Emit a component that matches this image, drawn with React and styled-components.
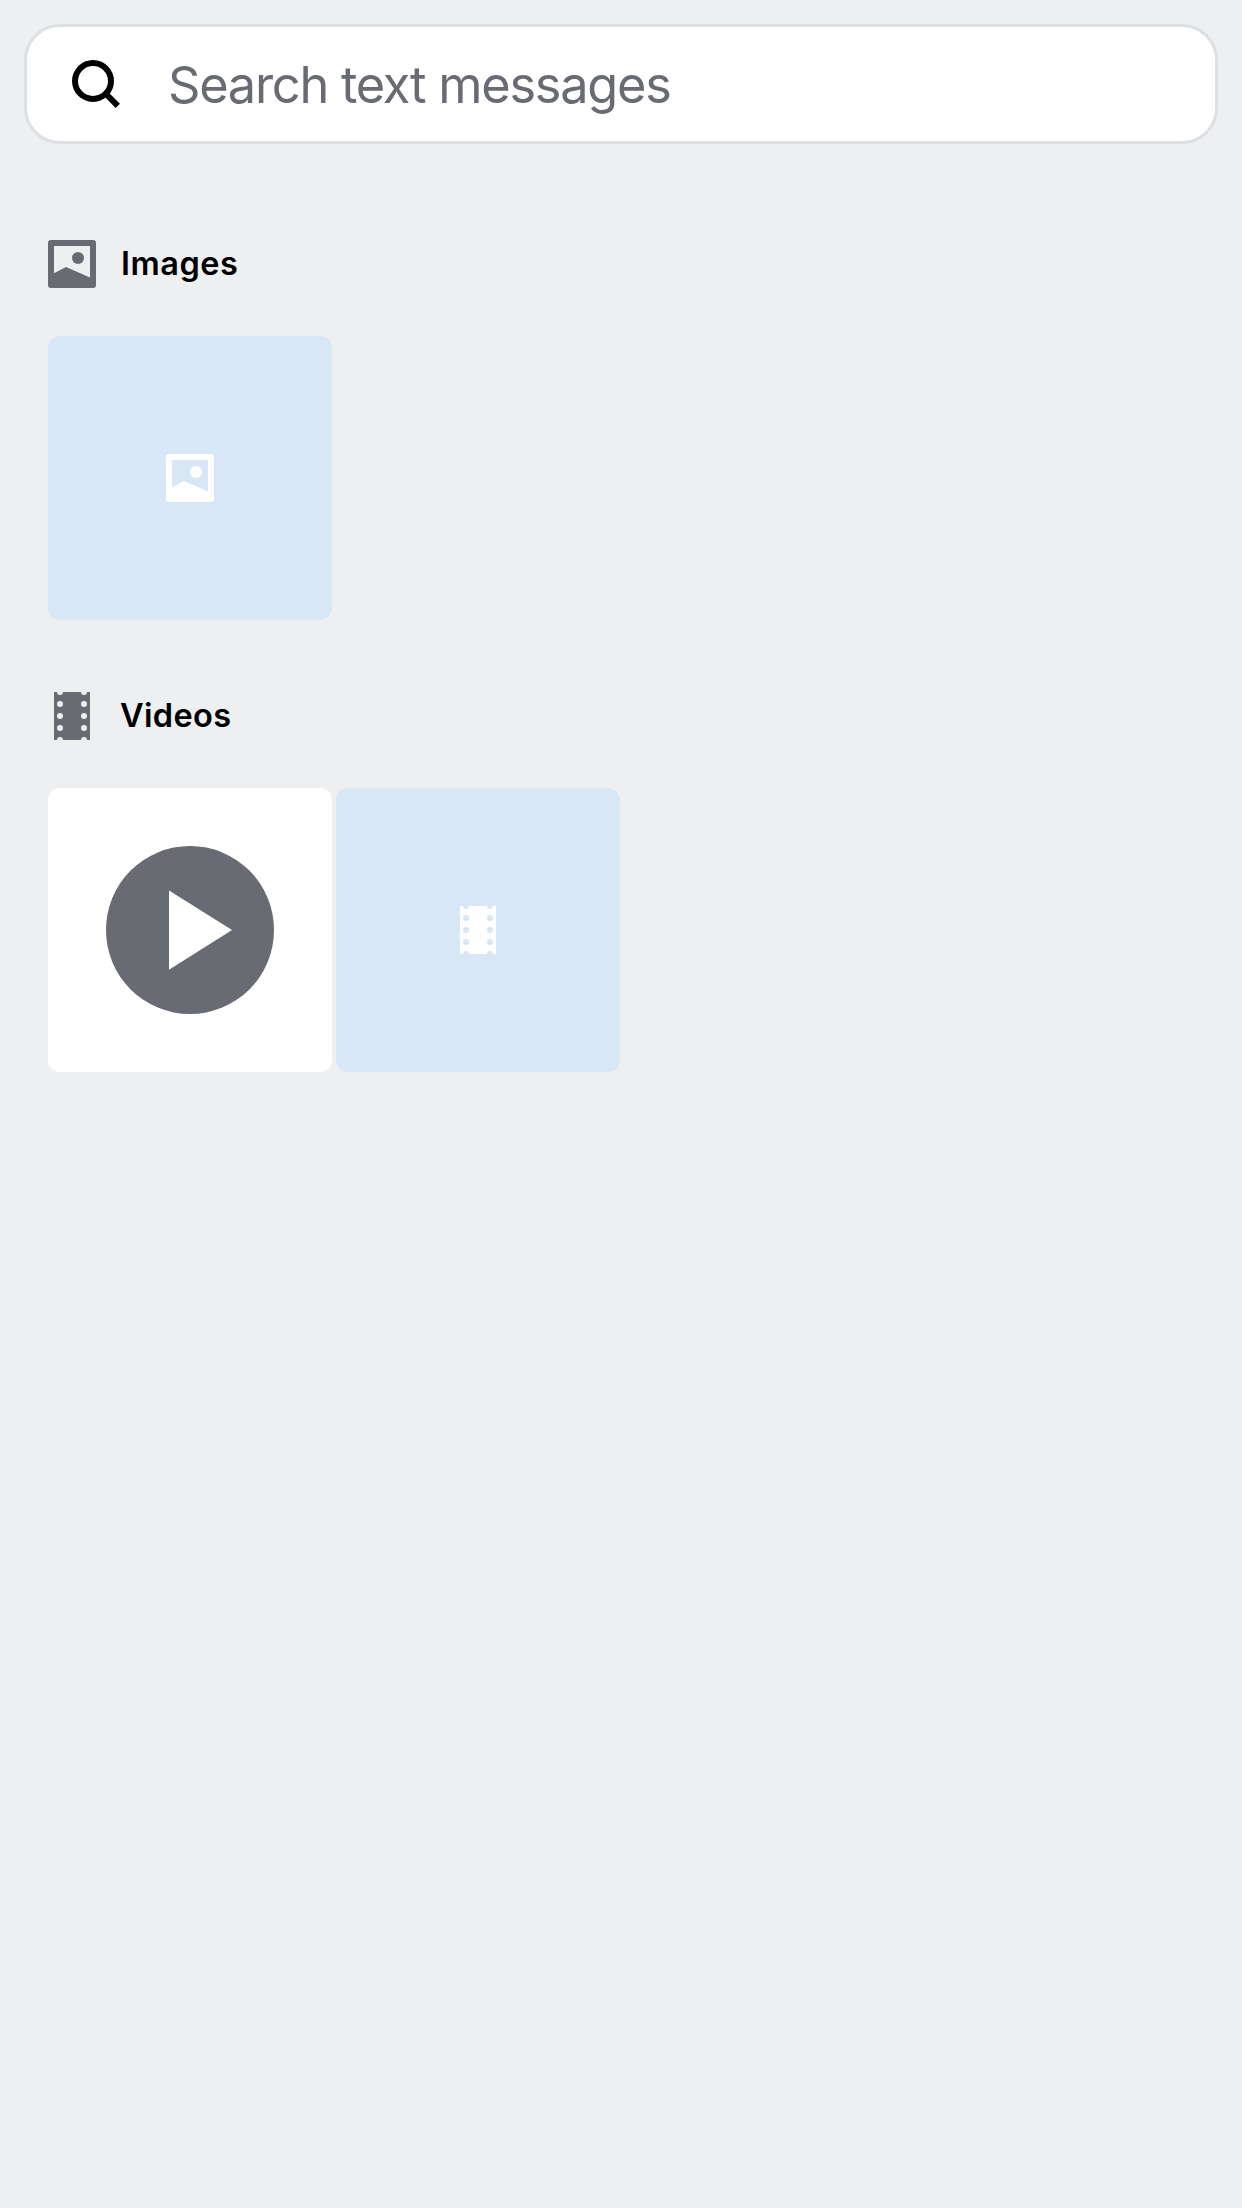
import React from 'react';
import styled, { createGlobalStyle } from 'styled-components';

const GlobalStyle = createGlobalStyle`
  * { box-sizing: border-box; }
  body {
    margin: 0;
    background: #edeff1;
    font-family: Inter, "Liberation Sans", sans-serif;
  }
`;

const Page = styled.main`
  min-height: 2208px;
  padding: 24px;
  background: #edeff1;
`;

const SearchBar = styled.label`
  display: flex;
  align-items: center;
  gap: 48px;
  height: 120px;
  padding: 0 45px;
  border: 3px solid #dce0e3;
  border-radius: 36px;
  background: #fff;
`;

const Placeholder = styled.span`
  color: #686b72;
  font-size: 50.5px;
  line-height: 60px;
  letter-spacing: -1.26px;
  white-space: nowrap;
  padding-top: 2px;
`;

const Sections = styled.div`
  display: flex;
  flex-direction: column;
  gap: 72px;
  padding: 96px 24px 0;
`;

const Section = styled.section`
  display: flex;
  flex-direction: column;
  gap: 48px;
`;

const SectionHeader = styled.header`
  display: flex;
  align-items: center;
  gap: 24px;
  height: 48px;
  color: #686b72;
`;

const Title = styled.h2`
  margin: 0;
  padding: 0 0 1px ${(p) => p.$indent || 0}px;
  color: #000;
  font-size: 32.5px;
  line-height: 45px;
  font-weight: 600;
  letter-spacing: ${(p) => p.$tracking}px;
`;

const Tiles = styled.div`
  display: flex;
  gap: 4px;
`;

const Tile = styled.div`
  display: flex;
  align-items: center;
  justify-content: center;
  width: 284px;
  height: 284px;
  border-radius: 12px;
  background: ${(p) => (p.$loaded ? '#fff' : '#d7e7f6')};
  color: ${(p) => (p.$loaded ? '#686b72' : '#fff')};
`;

const Icon = styled.svg`
  display: block;
  flex: none;
  width: ${(p) => p.$size || 48}px;
  height: ${(p) => p.$size || 48}px;
`;

const SearchIcon = () => (
  <Icon viewBox="0 0 48 48" fill="none" stroke="#000" strokeWidth="6">
    <circle cx="21" cy="21" r="18" />
    <path d="M33.5 33.5 45.8 45.8" />
  </Icon>
);

const ImageIcon = () => (
  <Icon viewBox="0 0 48 48" fill="currentColor">
    <path
      fillRule="evenodd"
      d="M3 0H45a3 3 0 0 1 3 3V45a3 3 0 0 1-3 3H3a3 3 0 0 1-3-3V3a3 3 0 0 1 3-3ZM6 6V33.3L18 27 42 37.6V6Z"
    />
    <circle cx="30" cy="18" r="6" />
  </Icon>
);

const FilmIcon = () => (
  <Icon viewBox="0 0 48 48" fill="currentColor">
    <path
      fillRule="evenodd"
      d="M6 0H9a3 3 0 0 0 6 0H33a3 3 0 0 0 6 0H42V48H39a3 3 0 0 0-6 0H15a3 3 0 0 0-6 0H6ZM9 12a3 3 0 1 0 6 0a3 3 0 1 0-6 0ZM9 24a3 3 0 1 0 6 0a3 3 0 1 0-6 0ZM9 36a3 3 0 1 0 6 0a3 3 0 1 0-6 0ZM33 12a3 3 0 1 0 6 0a3 3 0 1 0-6 0ZM33 24a3 3 0 1 0 6 0a3 3 0 1 0-6 0ZM33 36a3 3 0 1 0 6 0a3 3 0 1 0-6 0Z"
    />
  </Icon>
);

const PlayIcon = () => (
  <Icon $size={168} viewBox="0 0 168 168">
    <circle cx="84" cy="84" r="84" fill="currentColor" />
    <path d="M63 44.5V123.8L126 84.1Z" fill="#fff" />
  </Icon>
);

export default function App() {
  return (
    <>
      <GlobalStyle />
      <Page>
        <SearchBar>
          <SearchIcon />
          <Placeholder>Search text messages</Placeholder>
        </SearchBar>
        <Sections>
          <Section>
            <SectionHeader>
              <ImageIcon />
              <Title $tracking={0.5} $indent={1}>Images</Title>
            </SectionHeader>
            <Tiles>
              <Tile>
                <ImageIcon />
              </Tile>
            </Tiles>
          </Section>
          <Section>
            <SectionHeader>
              <FilmIcon />
              <Title $tracking={0.35}>Videos</Title>
            </SectionHeader>
            <Tiles>
              <Tile $loaded>
                <PlayIcon />
              </Tile>
              <Tile>
                <FilmIcon />
              </Tile>
            </Tiles>
          </Section>
        </Sections>
      </Page>
    </>
  );
}
